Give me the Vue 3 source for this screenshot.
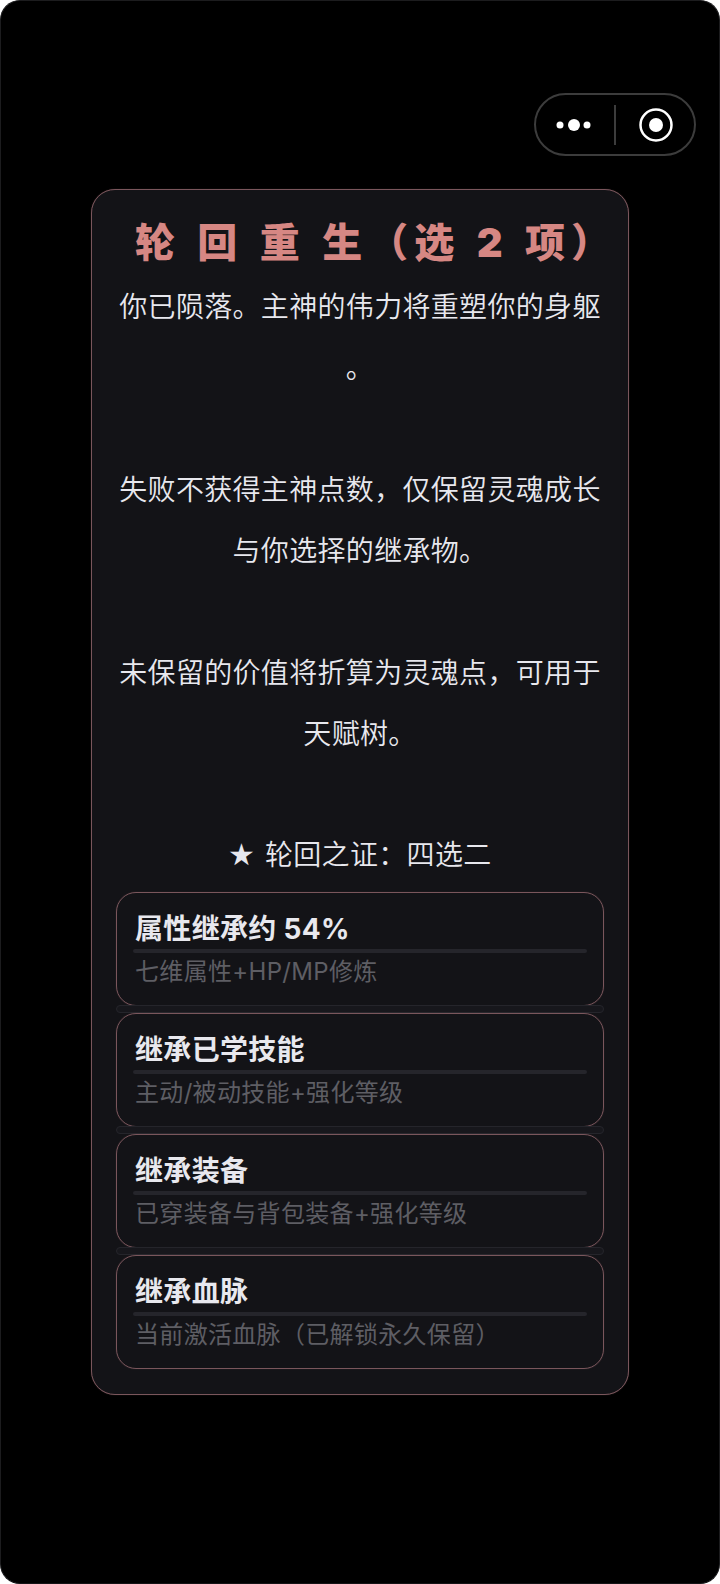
<script setup>
const paragraphs = [
  '你已陨落。主神的伟力将重塑你的身躯。',
  '失败不获得主神点数，仅保留灵魂成长与你选择的继承物。',
  '未保留的价值将折算为灵魂点，可用于天赋树。'
]
const items = [
  { title: '属性继承约 54%', sub: '七维属性+HP/MP修炼' },
  { title: '继承已学技能', sub: '主动/被动技能+强化等级' },
  { title: '继承装备', sub: '已穿装备与背包装备+强化等级' },
  { title: '继承血脉', sub: '当前激活血脉（已解锁永久保留）' }
]
</script>

<template>
  <div class="screen">
    <div class="capsule">
      <svg class="more" width="50" height="16" viewBox="0 0 50 16">
        <circle cx="6" cy="8" r="3.5" fill="#fff" />
        <circle cx="20" cy="8" r="6" fill="#fff" />
        <circle cx="33" cy="8" r="3.5" fill="#fff" />
      </svg>
      <span class="divider"></span>
      <svg class="target" width="36" height="36" viewBox="0 0 36 36">
        <circle cx="18" cy="18" r="15.5" fill="none" stroke="#fff" stroke-width="2.5" />
        <circle cx="18" cy="18" r="7" fill="#fff" />
      </svg>
    </div>

    <section class="card">
      <h1 class="title">轮 回 重 生（选 2 项）</h1>
      <div class="body">
        <p v-for="(p, i) in paragraphs" :key="i" class="para">{{ p }}</p>
      </div>
      <div class="proof"><span class="star">★</span> 轮回之证：四选二</div>
      <ul class="list">
        <li v-for="(it, i) in items" :key="i" class="row">
          <div class="item">
            <div class="item-title">{{ it.title }}</div>
            <div class="track"></div>
            <div class="item-sub">{{ it.sub }}</div>
          </div>
          <div v-if="i < items.length - 1" class="strip"></div>
        </li>
      </ul>
    </section>
  </div>
</template>

<style scoped>
.screen {
  position: relative;
  box-sizing: border-box;
  width: 720px;
  height: 1584px;
  padding-top: 188px;
  background: #000;
  border: 1px solid #1c1c1e;
  border-bottom-color: #141416;
  border-radius: 20px;
  overflow: hidden;
  font-family: Inter, "Noto Sans CJK SC", "Noto Sans", sans-serif;
  letter-spacing: 0.02em;
}
.capsule {
  position: absolute;
  top: 92px;
  left: 533px;
  box-sizing: border-box;
  width: 162px;
  height: 63px;
  display: flex;
  align-items: center;
  border: 2px solid #3c3c3c;
  border-radius: 32px;
}
.more {
  margin-left: 18px;
  flex: none;
}
.divider {
  width: 2px;
  height: 40px;
  margin-left: 10px;
  background: #3c3c3c;
  flex: none;
}
.target {
  margin-left: 22px;
  flex: none;
}
.card {
  box-sizing: border-box;
  width: 538px;
  height: 1206px;
  margin-left: 90px;
  padding: 24px;
  background: #131317;
  border: 1px solid #7a565c;
  border-radius: 24px;
  box-shadow: 0 0 1px rgba(122, 86, 92, 0.6);
}
.title {
  margin: 1px -32px 6px 0;
  height: 56px;
  font-size: 40px;
  line-height: 56px;
  font-weight: 900;
  letter-spacing: 6px;
  word-spacing: 2.5px;
  color: #d68783;
  text-align: center;
  white-space: nowrap;
}
.body {
  color: #e8e8ee;
  font-size: 28px;
  line-height: 61px;
  font-weight: 350;
  text-align: center;
}
.para {
  margin: 0 0 61px;
  line-break: anywhere;
}
.proof {
  margin-top: -1px;
  color: #e8e8ee;
  font-size: 28px;
  line-height: 60px;
  font-weight: 350;
  text-align: center;
}
.star {
  display: inline-block;
  font-family: "DejaVu Sans", sans-serif;
  font-size: 30px;
  line-height: 1;
  margin-right: 1px;
}
.list {
  list-style: none;
  margin: 7px 0 0;
  padding: 0;
}
.item {
  box-sizing: border-box;
  height: 114px;
  padding: 18px 16px 0 18px;
  border: 1px solid #7a565c;
  border-radius: 20px;
  box-shadow: 0 0 1px rgba(122, 86, 92, 0.6);
}
.item-title {
  color: #e8e8ee;
  font-size: 28px;
  line-height: 36px;
  font-weight: 700;
}
.track {
  height: 4px;
  margin: 2px 0 0 -2px;
  background: #25252b;
  border-radius: 2px;
}
.item-sub {
  margin-top: 1px;
  color: #5e5e64;
  font-size: 24px;
  line-height: 36px;
}
.strip {
  box-sizing: border-box;
  height: 8px;
  margin-top: -1px;
  background: #17171c;
  border: 1px solid #25252b;
  border-radius: 4px;
}
</style>
